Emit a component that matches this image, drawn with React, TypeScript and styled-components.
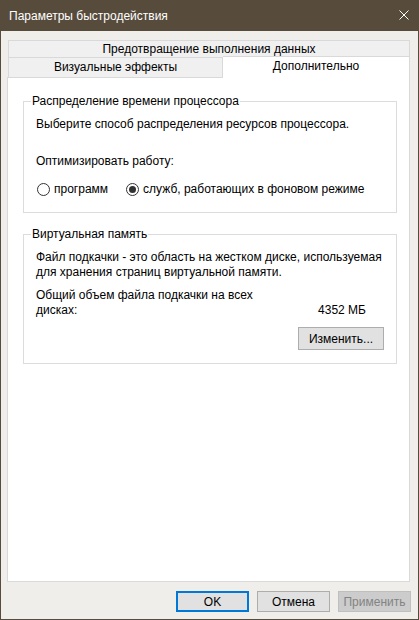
import React from 'react';
import styled, { createGlobalStyle } from 'styled-components';

const GlobalStyle = createGlobalStyle`
  html, body {
    margin: 0;
    padding: 0;
    background: #ffffff;
  }
  body {
    font-family: 'Liberation Sans', Arial, sans-serif;
    font-size: 12px;
    color: #000;
  }
  * {
    box-sizing: border-box;
  }
`;

const Window = styled.div`
  width: 419px;
  height: 620px;
  border: 1px solid #574b3b;
  background: #efeeea;
  display: flex;
  flex-direction: column;
`;

const TitleBar = styled.div`
  height: 30px;
  flex: none;
  background: #574b3b;
  color: #ffffff;
  display: flex;
  align-items: center;
  justify-content: space-between;
  padding: 0 9px 0 8px;
  line-height: 15px;
`;

const CloseButton = styled.svg`
  width: 10px;
  height: 10px;
  margin-bottom: 3px;
`;

const Body = styled.div`
  flex: 1;
  display: flex;
  flex-direction: column;
  padding: 9px 8px 7px 6px;
  min-height: 0;
`;

const TabStrip = styled.div`
  margin-left: 1px;
  display: flex;
  flex-direction: column;
`;

const TabRow = styled.div`
  display: flex;
`;

const Tab = styled.div<{ $selected?: boolean; $width?: number; $height: number; $line: number }>`
  position: relative;
  flex: ${(p) => (p.$width ? `0 0 ${p.$width}px` : '1')};
  height: ${(p) => p.$height}px;
  border: 1px solid #d9d9d9;
  border-bottom: none;
  background: ${(p) => (p.$selected ? '#ffffff' : '#f0f0f0')};
  text-align: center;
  line-height: ${(p) => p.$line}px;
  white-space: nowrap;
  ${(p) =>
    p.$selected &&
    `
    margin-top: -1px;
    margin-bottom: -1px;
    border-left: none;
    z-index: 1;
  `}
`;

const Panel = styled.div`
  flex: 1;
  background: #ffffff;
  border: 1px solid #d9d9d9;
  padding: 0 12px 0 15px;
`;

const GroupBox = styled.fieldset<{ $gap: number }>`
  margin: ${(p) => p.$gap}px 0 0;
  border: 1px solid #dcdcdc;
  padding: 0 12px 0 12px;
  min-width: 0;
`;

const GroupTitle = styled.legend`
  padding: 0 1px;
  margin-left: -5px;
  line-height: 15px;
`;

const GroupContent = styled.div<{ $top: number; $bottom: number }>`
  display: flex;
  flex-direction: column;
  padding: ${(p) => p.$top}px 0 ${(p) => p.$bottom}px;
`;

const Line = styled.p<{ $gap?: number }>`
  margin: ${(p) => p.$gap ?? 0}px 0 0;
  line-height: 15px;
`;

const RadioRow = styled.div`
  margin-top: 13px;
  display: flex;
  align-items: center;
  height: 15px;
`;

const RadioOption = styled.label`
  display: inline-flex;
  align-items: center;
  gap: 4px;
  margin-right: 17px;
  margin-left: 1px;
  line-height: 15px;
`;

const RadioMark = styled.span<{ $checked?: boolean }>`
  position: relative;
  width: 13px;
  height: 13px;
  border: 1px solid #333333;
  border-radius: 50%;
  background: #ffffff;

  &::after {
    content: '';
    display: ${(p) => (p.$checked ? 'block' : 'none')};
    position: absolute;
    left: 2px;
    top: 2px;
    width: 7px;
    height: 7px;
    border-radius: 50%;
    background: #333333;
  }
`;

const TotalRow = styled.div`
  margin-top: 8px;
  display: flex;
  justify-content: space-between;
  align-items: flex-end;
`;

const TotalLabel = styled.span`
  width: 230px;
  line-height: 15px;
`;

const TotalValue = styled.span`
  margin-right: 18px;
  line-height: 15px;
`;

const Button = styled.button<{ $default?: boolean; $width: number; $height: number }>`
  width: ${(p) => p.$width}px;
  height: ${(p) => p.$height}px;
  padding: 0;
  font-family: inherit;
  font-size: 12px;
  color: #000;
  background: #e1e1e1;
  border: ${(p) => (p.$default ? '2px solid #0078d7' : '1px solid #adadad')};

  &:disabled {
    color: #838383;
    background: #cccccc;
    border-color: #bfbfbf;
  }
`;

const ChangeButton = styled(Button)`
  align-self: flex-end;
  margin-top: 9px;
`;

const ButtonRow = styled.div`
  margin-top: 9px;
  margin-right: -1px;
  display: flex;
  justify-content: flex-end;
  gap: 8px;
`;

export default function App() {
  return (
    <>
      <GlobalStyle />
      <Window>
        <TitleBar>
          <span>Параметры быстродействия</span>
          <CloseButton viewBox="0 0 10 10">
            <path d="M0.5 0.5 L9.5 9.5 M9.5 0.5 L0.5 9.5" stroke="#ffffff" strokeWidth="1" fill="none" />
          </CloseButton>
        </TitleBar>
        <Body>
          <TabStrip>
            <TabRow>
              <Tab $height={17} $line={17}>
                Предотвращение выполнения данных
              </Tab>
            </TabRow>
            <TabRow>
              <Tab $height={20} $line={19} $width={215}>
                Визуальные эффекты
              </Tab>
              <Tab $height={22} $line={18} $selected>
                Дополнительно
              </Tab>
            </TabRow>
          </TabStrip>
          <Panel>
            <GroupBox $gap={16}>
              <GroupTitle>Распределение времени процессора</GroupTitle>
              <GroupContent $top={8} $bottom={15}>
                <Line>Выберите способ распределения ресурсов процессора.</Line>
                <Line $gap={22}>Оптимизировать работу:</Line>
                <RadioRow>
                  <RadioOption>
                    <RadioMark />
                    программ
                  </RadioOption>
                  <RadioOption>
                    <RadioMark $checked />
                    служб, работающих в фоновом режиме
                  </RadioOption>
                </RadioRow>
              </GroupContent>
            </GroupBox>
            <GroupBox $gap={14}>
              <GroupTitle>Виртуальная память</GroupTitle>
              <GroupContent $top={8} $bottom={13}>
                <Line>
                  Файл подкачки - это область на жестком диске, используемая
                  <br />
                  для хранения страниц виртуальной памяти.
                </Line>
                <TotalRow>
                  <TotalLabel>Общий объем файла подкачки на всех дисках:</TotalLabel>
                  <TotalValue>4352 МБ</TotalValue>
                </TotalRow>
                <ChangeButton $width={86} $height={23}>
                  Изменить...
                </ChangeButton>
              </GroupContent>
            </GroupBox>
          </Panel>
          <ButtonRow>
            <Button $default $width={73} $height={21}>
              OK
            </Button>
            <Button $width={73} $height={21}>
              Отмена
            </Button>
            <Button $width={73} $height={21} disabled>
              Применить
            </Button>
          </ButtonRow>
        </Body>
      </Window>
    </>
  );
}
